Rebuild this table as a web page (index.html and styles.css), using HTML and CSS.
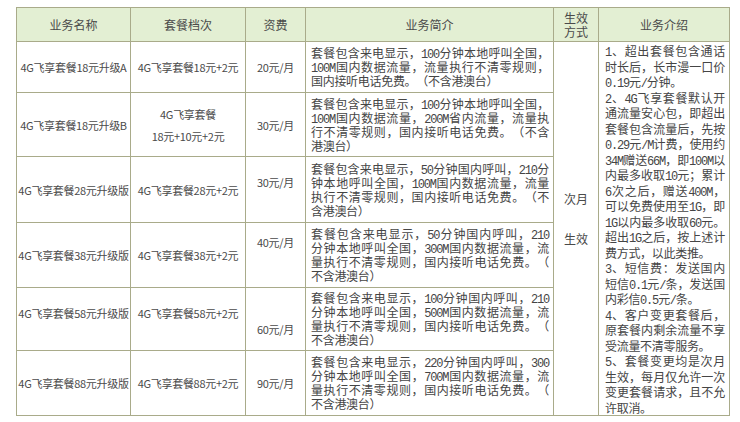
FILE: index.html
```html
<!DOCTYPE html>
<html lang="zh">
<head>
<meta charset="utf-8">
<title>4G飞享套餐升级</title>
<link rel="stylesheet" href="styles.css">
</head>
<body>
<table class="plan">
  <colgroup>
    <col class="c-name"><col class="c-tier"><col class="c-fee"><col class="c-desc"><col class="c-eff"><col class="c-intro">
  </colgroup>
  <tr class="r-head">
    <th>业务名称</th>
    <th>套餐档次</th>
    <th>资费</th>
    <th>业务简介</th>
    <th class="two">生效<br>方式</th>
    <th>业务介绍</th>
  </tr>
  <tr class="r1">
    <td class="sm">4G飞享套餐18元升级A</td>
    <td class="sm">4G飞享套餐18元+2元</td>
    <td class="sm">20元/月</td>
    <td class="desc">
      <div class="j">套餐包含来电显示，<span class="n">100</span>分钟本地呼叫全国，</div>
      <div class="j"><span class="n">100M</span>国内数据流量，流量执行不清零规则，</div>
      <div>国内接听电话免费。（不含港澳台）</div>
    </td>
    <td class="eff" rowspan="6"><div>次月</div><div class="gap">生效</div></td>
    <td class="intro" rowspan="6">
      <div class="j"><span class="n">1</span>、超出套餐包含通话</div>
      <div class="j">时长后，长市漫一口价</div>
      <div><span class="n">0.19</span>元<span class="n">/</span>分钟。</div>
      <div class="j"><span class="n">2</span>、<span class="n">4G</span>飞享套餐默认开</div>
      <div class="j">通流量安心包，即超出</div>
      <div class="j">套餐包含流量后，先按</div>
      <div class="j"><span class="n">0.29</span>元<span class="n">/M</span>计费，使用约</div>
      <div class="j"><span class="n">34M</span>赠送<span class="n">66M</span>，即<span class="n">100M</span>以</div>
      <div class="j">内最多收取<span class="n">10</span>元；累计</div>
      <div class="j"><span class="n">6</span>次之后，赠送<span class="n">400M</span>，</div>
      <div class="j">可以免费使用至<span class="n">1G</span>，即</div>
      <div class="j"><span class="n">1G</span>以内最多收取<span class="n">60</span>元。</div>
      <div class="j">超出<span class="n">1G</span>之后，按上述计</div>
      <div>费方式，以此类推。</div>
      <div class="j"><span class="n">3</span>、短信费：发送国内</div>
      <div class="j">短信<span class="n">0.1</span>元<span class="n">/</span>条，发送国</div>
      <div>内彩信<span class="n">0.5</span>元<span class="n">/</span>条。</div>
      <div class="j"><span class="n">4</span>、客户变更套餐后，</div>
      <div class="j">原套餐内剩余流量不享</div>
      <div>受流量不清零服务。</div>
      <div class="j"><span class="n">5</span>、套餐变更均是次月</div>
      <div class="j">生效，每月仅允许一次</div>
      <div class="j">变更套餐请求，且不允</div>
      <div>许取消。</div>
    </td>
  </tr>
  <tr class="r2">
    <td class="sm">4G飞享套餐18元升级B</td>
    <td class="sm tall">4G飞享套餐<br>18元+10元+2元</td>
    <td class="sm">30元/月</td>
    <td class="desc">
      <div class="j">套餐包含来电显示，<span class="n">100</span>分钟本地呼叫全国，</div>
      <div class="j"><span class="n">100M</span>国内数据流量，<span class="n">200M</span>省内流量，流量执</div>
      <div class="j">行不清零规则，国内接听电话免费。（不含</div>
      <div>港澳台）</div>
    </td>
  </tr>
  <tr class="r3">
    <td class="sm">4G飞享套餐28元升级版</td>
    <td class="sm">4G飞享套餐28元+2元</td>
    <td class="sm up">30元/月</td>
    <td class="desc">
      <div class="j">套餐包含来电显示，<span class="n">50</span>分钟国内呼叫，<span class="n">210</span>分</div>
      <div class="j">钟本地呼叫全国，<span class="n">100M</span>国内数据流量，流量</div>
      <div class="j">执行不清零规则，国内接听电话免费。（不</div>
      <div>含港澳台）</div>
    </td>
  </tr>
  <tr class="r4">
    <td class="sm">4G飞享套餐38元升级版</td>
    <td class="sm">4G飞享套餐38元+2元</td>
    <td class="sm up2">40元/月</td>
    <td class="desc">
      <div class="j">套餐包含来电显示，<span class="n">50</span>分钟国内呼叫，<span class="n">210</span></div>
      <div class="j">分钟本地呼叫全国，<span class="n">300M</span>国内数据流量，流</div>
      <div class="j">量执行不清零规则，国内接听电话免费。（</div>
      <div>不含港澳台）</div>
    </td>
  </tr>
  <tr class="r5">
    <td class="sm lift">4G飞享套餐58元升级版</td>
    <td class="sm lift">4G飞享套餐58元+2元</td>
    <td class="sm down">60元/月</td>
    <td class="desc">
      <div class="j">套餐包含来电显示，<span class="n">100</span>分钟国内呼叫，<span class="n">210</span></div>
      <div class="j">分钟本地呼叫全国，<span class="n">500M</span>国内数据流量，流</div>
      <div class="j">量执行不清零规则，国内接听电话免费。（</div>
      <div>不含港澳台）</div>
    </td>
  </tr>
  <tr class="r6">
    <td class="sm">4G飞享套餐88元升级版</td>
    <td class="sm">4G飞享套餐88元+2元</td>
    <td class="sm">90元/月</td>
    <td class="desc">
      <div class="j">套餐包含来电显示，<span class="n">220</span>分钟国内呼叫，<span class="n">300</span></div>
      <div class="j">分钟本地呼叫全国，<span class="n">700M</span>国内数据流量，流</div>
      <div class="j">量执行不清零规则，国内接听电话免费。（</div>
      <div>不含港澳台）</div>
    </td>
  </tr>
</table>
</body>
</html>
```

FILE: styles.css
```css
html, body {
  margin: 0;
  padding: 0;
  background: #ffffff;
}
body {
  font-family: "Noto Sans CJK SC", "Noto Sans", sans-serif;
  color: #454545;
  font-size: 12px;
  text-spacing-trim: space-all;
}
.plan {
  margin: 7px 0 0 16px;
  width: 713px;
  border-collapse: collapse;
  table-layout: fixed;
  border: 1px solid #a9ab8a;
}
.c-name { width: 114px; }
.c-tier { width: 115px; }
.c-fee { width: 60px; }
.c-desc { width: 248px; }
.c-eff { width: 45px; }
.c-intro { width: 131px; }

th, td {
  border: 1px solid #a9ab8a;
  padding: 0;
}
th {
  background: #e3efd3;
  font-weight: normal;
  font-size: 12px;
  line-height: 14px;
  color: #4a4a4a;
  text-align: center;
  vertical-align: middle;
}
.r-head { height: 34px; }
.r1 { height: 51px; }
.r2 { height: 64px; }
.r3 { height: 66px; }
.r4 { height: 65px; }
.r5 { height: 63px; }
.r6 { height: 65px; }

.sm {
  font-size: 11px;
  line-height: 14px;
  text-align: center;
  vertical-align: middle;
  white-space: nowrap;
  letter-spacing: -0.3px;
  color: #4a4a4a;
}
.tall { line-height: 22px; }
.up { padding-bottom: 16px; }
.up2 { padding-bottom: 26px; }
.down { padding-top: 20px; }
.lift { padding-bottom: 12px; }

.desc {
  vertical-align: middle;
  padding: 0 4px 0 5px;
  line-height: 14px;
  font-size: 12px;
  white-space: nowrap;
  letter-spacing: -0.3px;
}
.j {
  text-align: justify;
  text-align-last: justify;
}
.n {
  font-family: "Liberation Mono", "DejaVu Sans Mono", monospace;
  font-size: 12px;
  line-height: 0;
  letter-spacing: -1.2px;
}
.eff {
  vertical-align: top;
  text-align: center;
  line-height: 20px;
  padding-top: 147px;
  color: #4a4a4a;
}
.gap { margin-top: 20px; }
.intro {
  vertical-align: top;
  padding: 1px 4px 0 6px;
  line-height: 15.5px;
  font-size: 12px;
  white-space: nowrap;
  letter-spacing: -0.3px;
}
```
